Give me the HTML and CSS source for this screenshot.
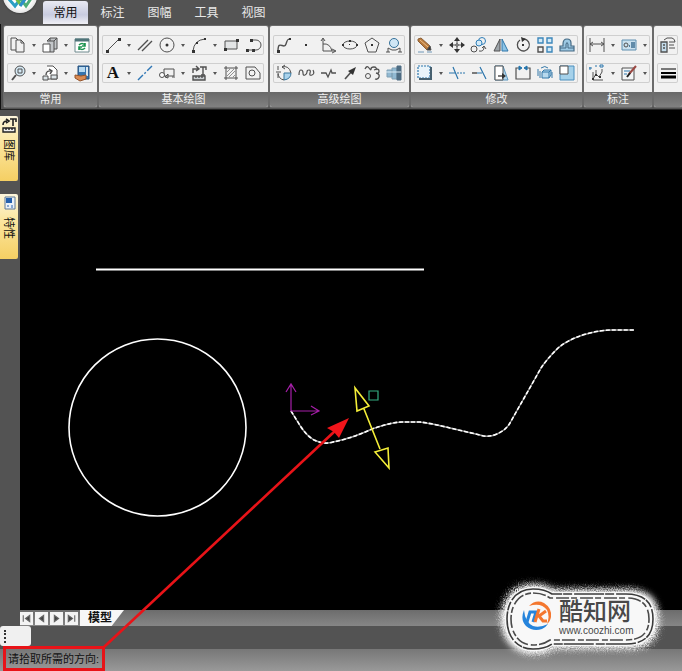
FILE: index.html
```html
<!DOCTYPE html>
<html lang="zh-CN">
<head>
<meta charset="UTF-8" />
<meta name="viewport" content="width=device-width, initial-scale=1" />
<title>电子图板</title>
<link rel="stylesheet" href="styles.css">
</head>
<body>
  <header class="menu-bar">
    <button class="app-button" type="button" aria-label="菜单">
      <svg viewBox="0 0 34 34">
        <path d="M5 19l7 8 6-8" stroke="#2b9fc4" stroke-width="3" />
        <path d="M12 18l6 8" stroke="#74bd45" stroke-width="3" />
        <path d="M17 19l6 8 6-9" stroke="#4fae78" stroke-width="3" />
        <path d="M17 27l6-8" stroke="#2d8fcb" stroke-width="3" />
      </svg>
    </button>
    <nav class="tabs">
      <button class="tab active" type="button">常用</button>
      <button class="tab" type="button">标注</button>
      <button class="tab" type="button">图幅</button>
      <button class="tab" type="button">工具</button>
      <button class="tab" type="button">视图</button>
    </nav>
  </header>

  <div class="ribbon">
    <section class="panel">
      <div class="panel-body">
        <div class="group">
          <button class="tool" type="button" aria-label="复制"><svg viewBox="0 0 18 18"><path d="M7 14H2V2h5l2 2M7 4h5l3 3v9H7zM12 4v3h3" /></svg></button>
          <button class="more" type="button" aria-label="更多"></button>
          <button class="tool" type="button" aria-label="粘贴"><svg viewBox="0 0 18 18"><path d="M6 5l3-3h7v11h-3M6 5h7v11H9" fill="#c3c6c9" /><path d="M9 2v3M13 5l3-3" /><path d="M2 8h7v8H2z" fill="#fff" /></svg></button>
          <button class="more" type="button" aria-label="更多"></button>
          <button class="tool" type="button" aria-label="刷新"><svg viewBox="0 0 18 18"><path d="M2 3h14v13H2z" fill="#fff" stroke="#6f8a8e" /><path d="M2 4h14" stroke="#4f7479" stroke-width="3" /><path d="M6 9q3-3 6 0M12 7v3H9M12 12q-3 3-6 0M6 14v-3h3" stroke="#1c9450" stroke-width="1.6" /></svg></button>
        </div>
        <div class="group">
          <button class="tool" type="button" aria-label="缩放"><svg viewBox="0 0 18 18"><circle cx="11" cy="7" r="5" fill="#d6eaf5" /><path d="M9 5h4v4H9z" /><path d="M7 11l-4 5" stroke-width="2" /></svg></button>
          <button class="more" type="button" aria-label="更多"></button>
          <button class="tool" type="button" aria-label="块"><svg viewBox="0 0 18 18"><path d="M6 2h6l4 4v9H7" fill="#fff" /><path d="M2 12h5v4H2zM10 11h6v4h-6z" fill="#dce4e8" /><path d="M5 11q0-5 6-4M8 5l3 2-2 3" stroke-width="1.4" /></svg></button>
          <button class="more" type="button" aria-label="更多"></button>
          <button class="tool" type="button" aria-label="特性"><svg viewBox="0 0 18 18"><path d="M5 2h11v13H5z" fill="#3775af" stroke="#264f79" /><path d="M6 3h6v5H6z" fill="#b8daf1" stroke="none" /><path d="M13 3h2v9h-2z" fill="#dbe7f0" stroke="none" /><path d="M2 11l6 1 5-1v4l-6 2-5-3z" fill="#d98a52" stroke="#94542c" /></svg></button>
        </div>
      </div>
      <h2 class="panel-title">常用</h2>
    </section>

    <section class="panel">
      <div class="panel-body">
        <div class="group">
          <button class="tool" type="button" aria-label="直线"><svg viewBox="0 0 18 18"><path d="M3 15L15 3" /><path d="M2 14h3v3H2zM14 2h3v3h-3z" class="solid" /></svg></button>
          <button class="more" type="button" aria-label="更多"></button>
          <button class="tool" type="button" aria-label="平行线"><svg viewBox="0 0 18 18"><path d="M2 14L12 4M6 15L16 5" stroke-width="1.4" /></svg></button>
          <button class="tool" type="button" aria-label="圆"><svg viewBox="0 0 18 18"><circle cx="9" cy="9" r="7" /><circle cx="9" cy="9" r="1.5" class="solid" /></svg></button>
          <button class="more" type="button" aria-label="更多"></button>
          <button class="tool" type="button" aria-label="圆弧"><svg viewBox="0 0 18 18"><path d="M3 15Q4 4 15 3" /><path d="M2 14h3v3H2zM14 2h2v2h-2zM6 6h2v2H6z" class="solid" /></svg></button>
          <button class="more" type="button" aria-label="更多"></button>
          <button class="tool" type="button" aria-label="矩形"><svg viewBox="0 0 18 18"><path d="M3 5h12v8H3z" fill="#e3e5e6" /><path d="M2 12h3v3H2zM14 3h3v3h-3z" class="solid" /></svg></button>
          <button class="tool" type="button" aria-label="多段线"><svg viewBox="0 0 18 18"><path d="M8 4h4a5 5 0 0 1 0 10H9" /><path d="M6 3h3v3H6zM2 13h3v3H2zM8 13h3v3H8z" class="solid" /><path d="M4 14h5" /></svg></button>
        </div>
        <div class="group">
          <button class="tool letter" type="button" aria-label="文字">A</button>
          <button class="more" type="button" aria-label="更多"></button>
          <button class="tool" type="button" aria-label="中心线"><svg viewBox="0 0 18 18"><path d="M2 16L16 2" stroke="#2e76b5" stroke-width="1.4" stroke-dasharray="7 2 2 2" /></svg></button>
          <button class="tool" type="button" aria-label="孔"><svg viewBox="0 0 18 18"><path d="M6 5h10v7H6z" /><circle cx="4" cy="11" r="2.5" fill="#fff" /><path d="M7 13l3-3v4zM14 13h3" /></svg></button>
          <button class="more" type="button" aria-label="更多"></button>
          <button class="tool" type="button" aria-label="提取图符"><svg viewBox="0 0 18 18"><path d="M3 12h12v4H3zM6 12v2M9 12v2M12 12v2" fill="#c9ced1" stroke-width="1.4" /><path d="M3 9V5h5M6 2l3 3-3 2M10 3h6v3M13 3v8M11 11h4" stroke-width="1.4" /></svg></button>
          <button class="more" type="button" aria-label="更多"></button>
          <button class="tool" type="button" aria-label="剖面线"><svg viewBox="0 0 18 18"><path d="M4 2v14M14 2v14M2 4h14M2 14h14" /><path d="M5 8l3-3M5 12l7-7M7 13l6-6M11 13l2-2" stroke="#909090" /></svg></button>
          <button class="tool" type="button" aria-label="局部放大"><svg viewBox="0 0 18 18"><path d="M2 3h9l5 6v6H2z" /><circle cx="8" cy="9" r="3" /></svg></button>
        </div>
      </div>
      <h2 class="panel-title">基本绘图</h2>
    </section>

    <section class="panel">
      <div class="panel-body">
        <div class="group">
          <button class="tool" type="button" aria-label="样条"><svg viewBox="0 0 18 18"><path d="M3 15C3 3 9 14 11 8S12 4 15 3" stroke-width="1.4" /><path d="M2 14h3v3H2zM14 2h2v2h-2z" class="solid" /></svg></button>
          <button class="tool" type="button" aria-label="点"><svg viewBox="0 0 18 18"><path d="M8 8h2v2H8z" class="solid" /></svg></button>
          <button class="tool" type="button" aria-label="公式曲线"><svg viewBox="0 0 18 18"><path d="M4 3v12h12M4 8q7-1 9 7M2 5l2-3 2 3M13 13l4 2-4 2" /></svg></button>
          <button class="tool" type="button" aria-label="椭圆"><svg viewBox="0 0 18 18"><ellipse cx="9" cy="9" rx="7" ry="4" /><path d="M1 8h2v2H1zM15 8h2v2h-2zM8 4h2v2H8zM8 8h1v1H8z" class="solid" /></svg></button>
          <button class="tool" type="button" aria-label="正多边形"><svg viewBox="0 0 18 18"><path d="M9 2l7 5-3 9H5L2 7z" /><path d="M8 8h2v2H8z" class="solid" /></svg></button>
          <button class="tool" type="button" aria-label="圆弧拟合"><svg viewBox="0 0 18 18"><circle cx="9" cy="7" r="4.5" fill="#cfe6f5" stroke="#35719a" /><path d="M3 16v-4l4 2h4l4-2v4M1 16h4M13 16h4" /></svg></button>
        </div>
        <div class="group">
          <button class="tool" type="button" aria-label="圆形阵列"><svg viewBox="0 0 18 18"><path d="M9 9h7q0 6-7 7z" fill="#a9d2ec" stroke="#39769d" /><path d="M9 16a7 7 0 0 1-6-7M7 3q7-2 9 6M3 2v4M1 8h5M3 10v4M7 3l3-2M7 3l3 2" /></svg></button>
          <button class="tool" type="button" aria-label="波浪线"><svg viewBox="0 0 18 18"><path d="M2 11Q2 6 4 6T6 9t2 2 2-3 2-2 1 3 2 2 1-5" stroke-width="1.2" /></svg></button>
          <button class="tool" type="button" aria-label="双折线"><svg viewBox="0 0 18 18"><path d="M2 9h5l2 4 3-7 1 3h4" stroke-width="1.3" /></svg></button>
          <button class="tool" type="button" aria-label="箭头"><svg viewBox="0 0 18 18"><path d="M4 15l7-8" stroke-width="1.6" /><path d="M15 3l-3 8-5-4z" class="solid" /></svg></button>
          <button class="tool" type="button" aria-label="云线"><svg viewBox="0 0 18 18"><path d="M2 5q2-4 4-1t2 1 3-2 2 3M11 6q5-2 5 1t-3 2q4 1 3 4t-4 2" stroke-width="1.3" /><circle cx="5" cy="12" r="2.5" /></svg></button>
          <button class="tool" type="button" aria-label="轴"><svg viewBox="0 0 18 18"><path d="M2 6h5v7H2zM7 4h5v11H7z" fill="#91b9d2" stroke="#7f9fb4" /><path d="M12 2h4v14h-4z" fill="#4e6d83" stroke="#4e6d83" /><path d="M1 8h15" stroke="#dcecf6" /></svg></button>
        </div>
      </div>
      <h2 class="panel-title">高级绘图</h2>
    </section>

    <section class="panel">
      <div class="panel-body">
        <div class="group">
          <button class="tool" type="button" aria-label="删除"><svg viewBox="0 0 18 18"><path d="M2 3l3-1 9 8-3 4-9-9z" fill="#b97a3d" stroke="#8a6038" /><path d="M4 4l8 7" stroke="#edc088" /><path d="M11 14l3-4 1 4z" fill="#333" /><path d="M2 16h6M11 16h5" stroke="#6f97b8" /></svg></button>
          <button class="more" type="button" aria-label="更多"></button>
          <button class="tool" type="button" aria-label="平移"><svg viewBox="0 0 18 18"><path d="M9 3v12M3 9h12" /><path d="M9 1l3 4H6zM9 17l3-4H6zM1 9l4-3v6zM17 9l-4-3v6z" class="solid" /><path d="M8 8h2v2H8z" fill="#fff" /></svg></button>
          <button class="tool" type="button" aria-label="平移复制"><svg viewBox="0 0 18 18"><circle cx="12" cy="5" r="3.5" stroke="#2e7eb8" /><circle cx="9" cy="7" r="3" stroke="#2e7eb8" fill="#d4eaf7" /><circle cx="4" cy="13" r="3" /><path d="M9 15q5 1 5-4M12 12l2-2 2 3" /></svg></button>
          <button class="tool" type="button" aria-label="镜像"><svg viewBox="0 0 18 18"><path d="M8 3v12H2z" fill="#9da4a9" /><path d="M10 3v12h6z" fill="#8dc4e6" stroke="#2e76aa" /></svg></button>
          <button class="tool" type="button" aria-label="旋转"><svg viewBox="0 0 18 18"><path d="M10 3a6 6 0 1 1-4 1" stroke-width="1.3" /><path d="M7 1l5 2-4 3zM8 8h2v2H8z" class="solid" /></svg></button>
          <button class="tool" type="button" aria-label="阵列"><svg viewBox="0 0 18 18"><path d="M2 2h5v5H2zM11 2h5v5h-5zM11 11h5v5h-5z" stroke="#3c87bb" fill="#d4eaf7" stroke-width="1.4" /><path d="M2 11h5v5H2z" stroke-width="1.4" /></svg></button>
          <button class="tool" type="button" aria-label="等距线"><svg viewBox="0 0 18 18"><path d="M2 10h3V8q0-5 4-5t4 4v3h3v5H2z" fill="#9cc8e3" stroke="#466b85" stroke-width="1.2" /><path d="M2 12h6V8q1-3 2 0v4h6" stroke="#466b85" /></svg></button>
        </div>
        <div class="group">
          <button class="tool" type="button" aria-label="拉伸"><svg viewBox="0 0 18 18"><path d="M2 2h12v12H2z" fill="#eaf4fa" stroke="#2d76ac" stroke-width="1.2" stroke-dasharray="2 1" /><path d="M15 3v12H3" stroke="#47606f" stroke-width="2" /></svg></button>
          <button class="more" type="button" aria-label="更多"></button>
          <button class="tool" type="button" aria-label="裁剪"><svg viewBox="0 0 18 18"><path d="M5 3l5 12M1 9h6" stroke="#2d76ac" stroke-width="1.2" /><path d="M9 9h8" stroke="#2d76ac" stroke-dasharray="2 1" /></svg></button>
          <button class="tool" type="button" aria-label="延伸"><svg viewBox="0 0 18 18"><path d="M2 9h5" stroke-width="1.4" /><path d="M7 9h5M10 3l6 12" stroke="#2d76ac" stroke-width="1.2" /></svg></button>
          <button class="tool" type="button" aria-label="拉伸面"><svg viewBox="0 0 18 18"><path d="M3 2h8l5 14H3z" fill="#b5d8ee" stroke="#5a95bd" /><path d="M3 2h8v14H3z" fill="#fff" /><path d="M6 12h6" stroke-width="1.4" /><path d="M10 9l4 3-4 3z" class="solid" /></svg></button>
          <button class="tool" type="button" aria-label="打断"><svg viewBox="0 0 18 18"><path d="M5 4H2v11h14V4h-3" stroke-width="1.2" /><path d="M5 2l3 2-3 2zM13 2l-3 2 3 2z" fill="#2375ad" stroke="#2375ad" /></svg></button>
          <button class="tool" type="button" aria-label="分解"><svg viewBox="0 0 18 18"><path d="M6 8l2-2h7v5l-2 3H6zM6 8h7v6M13 8l2-2" fill="#b7d9ee" stroke="#3479a9" /><path d="M2 5v7M4 7v7M5 4q4-3 7 0M16 8v6" stroke="#3479a9" /></svg></button>
          <button class="tool" type="button" aria-label="缩放图形"><svg viewBox="0 0 18 18"><path d="M2 2h14v14H2z" fill="#a5d1ea" stroke="#4b8fbe" /><path d="M2 2h8v8H2z" fill="#fff" /></svg></button>
        </div>
      </div>
      <h2 class="panel-title">修改</h2>
    </section>

    <section class="panel compact">
      <div class="panel-body">
        <div class="group">
          <button class="tool" type="button" aria-label="尺寸标注"><svg viewBox="0 0 18 18"><path d="M2 2v14M16 2v14M2 8h14M5 6L2 8l3 2M13 6l3 2-3 2" /></svg></button>
          <button class="more" type="button" aria-label="更多"></button>
          <button class="tool" type="button" aria-label="形位公差"><svg viewBox="0 0 18 18"><path d="M2 4h14v10H2z" fill="#c9e0ef" stroke="#5f8fb0" /><circle cx="6" cy="9" r="2" /><path d="M9 10h1M12 6v6M14 6v6" stroke="#285e84" stroke-width="1.3" /></svg></button>
          <button class="more" type="button" aria-label="更多"></button>
        </div>
        <div class="group">
          <button class="tool" type="button" aria-label="坐标标注"><svg viewBox="0 0 18 18"><path d="M5 8v8h10M5 15l3-5 3 3 3-5M8 10V6M14 8V5" /><path d="M2 3v3M1 4h3M7 2h2M12 1h3v2h-3z" stroke="#2d76ac" /><path d="M4 14h2v2H4zM7 10h2v2H7zM11 12h2v2h-2z" class="solid" /></svg></button>
          <button class="more" type="button" aria-label="更多"></button>
          <button class="tool" type="button" aria-label="标注编辑"><svg viewBox="0 0 18 18"><path d="M2 4h12v12H2z" fill="#f4f6f7" /><path d="M4 7h6M4 10h3" stroke="#2d76ac" /><path d="M9 10l7-8" stroke="#9b4944" stroke-width="2" /><path d="M7 13l3-4" stroke="#222" stroke-width="2" /></svg></button>
          <button class="more" type="button" aria-label="更多"></button>
        </div>
      </div>
      <h2 class="panel-title">标注</h2>
    </section>

    <section class="panel last">
      <div class="panel-body">
        <div class="group">
          <button class="tool" type="button" aria-label="图层"><svg viewBox="0 0 18 18"><path d="M2 6h6v10H2zM4 9h2M4 12h2" fill="#c4dceb" stroke-width="1.3" /><path d="M5 4l3-2h5q3 1 3 4M10 6h6M10 9h5M10 12h6" /></svg></button>
          <button class="tool" type="button" aria-label="图层列表"></button>
        </div>
        <div class="group">
          <button class="tool" type="button" aria-label="线宽"><svg viewBox="0 0 18 18"><path d="M2 5h15" stroke="#000" stroke-width="1" /><path d="M2 9h15" stroke="#000" stroke-width="2" /><path d="M2 13h15" stroke="#000" stroke-width="3" /></svg></button>
          <button class="tool" type="button" aria-label="线宽列表"></button>
        </div>
      </div>
      <h2 class="panel-title"></h2>
    </section>
  </div>

  <main class="workspace">
    <aside class="side-bar">
      <button class="side-tab" type="button">
        <svg viewBox="0 0 16 16"><path d="M2 11h12v4H2zM5 11v2M8 11v2M11 11v2" fill="#eee" stroke-width="1.4" /><path d="M2 8q0-4 4-4M5 2l3 2-3 2M9 2h6v3M12 2v7" stroke-width="1.6" /></svg>
        <span>图库</span>
      </button>
      <button class="side-tab" type="button">
        <svg viewBox="0 0 16 16"><path d="M4 2h10v12H4z" fill="#eaf1f7" stroke="#5e7994" /><path d="M5 3h6v5H5z" fill="#2461ae" stroke="none" /><path d="M6 11h2M11 10v3" stroke="#2461ae" /></svg>
        <span>特性</span>
      </button>
    </aside>

    <div class="canvas">
      <svg viewBox="20 110 662 500" preserveAspectRatio="xMinYMin meet" aria-label="绘图区">
        <path d="M96 269.500H424" stroke="#fff" stroke-width="1.8" />
        <circle cx="157.500" cy="427.500" r="88.500" stroke="#fff" stroke-width="1.6" />
        <path d="M291 411L301 427Q307 436 314 440Q324 445 333 442Q353 438 372 429Q392 422 402 422H420Q435 424 450 428L480 435Q488 438 497 434Q506 430 510 423L541 368Q547 359 558 348Q570 338 590 333Q602 330 612 330H634" stroke="#999" stroke-width="1.4" />
        <path d="M291 411L301 427Q307 436 314 440Q324 445 333 442Q353 438 372 429Q392 422 402 422H420Q435 424 450 428L480 435Q488 438 497 434Q506 430 510 423L541 368Q547 359 558 348Q570 338 590 333Q602 330 612 330H634" stroke="#fff" stroke-width="1.6" stroke-dasharray="4 2" />
        <!-- local axes -->
        <path d="M291 411V384M286 392l5-8 5 8M291 411h28M311 406l8 5-8 4" stroke="#a51fa8" stroke-width="1.2" />
        <!-- offset direction -->
        <path d="M364 409L380 449M355 388l2 23 12-5zM375 452l13-4 1 20z" stroke="#f4ee38" stroke-width="1.6" />
        <path d="M369 391h9v9h-9z" stroke="#35ad82" stroke-width="1.2" />
      </svg>
    </div>
  </main>

  <div class="sheet-bar">
    <button class="sheet-nav" type="button" aria-label="首页"><svg viewBox="0 0 12 12"><path d="M3 3v6M9 3v6L5 6z" /></svg></button>
    <button class="sheet-nav" type="button" aria-label="上一页"><svg viewBox="0 0 12 12"><path d="M8 3v6L4 6z" /></svg></button>
    <button class="sheet-nav" type="button" aria-label="下一页"><svg viewBox="0 0 12 12"><path d="M4 3v6l4-3z" /></svg></button>
    <button class="sheet-nav" type="button" aria-label="末页"><svg viewBox="0 0 12 12"><path d="M9 3v6M3 3v6l4-3z" /></svg></button>
    <button class="sheet-tab" type="button">模型</button>
  </div>

  <div class="tool-strip">
    <div class="grip"></div>
  </div>

  <footer class="command-bar">请拾取所需的方向:</footer>

  <svg class="callout" viewBox="0 0 682 671" preserveAspectRatio="xMinYMin meet" aria-hidden="true">
    <path d="M104 647L335 431" stroke="#e81318" stroke-width="2.6" />
    <path d="M349 418L339 438L334 432L327 428z" fill="#f2151b" />
    <rect x="4.500" y="647.500" width="99" height="22" stroke="#e81318" stroke-width="3" />
  </svg>

  <div class="brand">
    <svg class="brand-plate" viewBox="0 0 180 90" aria-hidden="true">
      <defs>
        <filter id="glow" x="-10%" y="-20%" width="120%" height="140%">
          <feTurbulence type="fractalNoise" baseFrequency="0.9" numOctaves="2" seed="4" result="noise" />
          <feGaussianBlur in="SourceGraphic" stdDeviation="3" result="soft" />
          <feDisplacementMap in="soft" in2="noise" scale="8" />
        </filter>
      </defs>
      <path d="M41 11q14 0 20 5h75q31 0 31 30t-31 30H61q-6 5-20 5C21 81 9 66 9 46S21 11 41 11z" fill="#fff" filter="url(#glow)" />
      <path d="M41 14q12 0 19 5h74q29 0 29 27t-29 27H60q-7 5-19 5C23 78 13 64 13 46S23 14 41 14z" fill="#f8f8f8" />
      <path d="M41 16q12 0 19 5h74q27 0 27 25t-27 25H60q-7 5-19 5C24 76 15 63 15 46S24 16 41 16z" stroke="#3a3a3a" stroke-width="1.6" stroke-dasharray="30 1 9 2" />
      <path d="M41 20q10 0 17 5h76q23 0 23 21t-23 21H58q-7 5-17 5C27 72 19 60 19 46S27 20 41 20z" stroke="#4a4a4a" stroke-width="1.6" stroke-dasharray="13 2 6 3" />
    </svg>
    <div class="brand-content">
      <svg class="brand-logo" viewBox="0 0 32 32" aria-hidden="true">
        <path d="M8 7Q15 0 23 4Q31 9 30 18Q29 23 26 25Q29 17 26 11Q20 3 8 7z" fill="#f4772f" />
        <path d="M3 11Q-1 21 5 27Q12 33 21 30Q25 28 27 25Q19 29 12 27Q4 23 3 11z" fill="#2584dc" />
        <path d="M6 23l3-10h6l-3 10" stroke="#2584dc" stroke-width="3" />
        <path d="M18 10l-4 13M25 12l-7 5 4 5h4" stroke="#f4772f" stroke-width="3" />
      </svg>
      <div class="brand-text">
        <strong>酷知网</strong>
        <span>www.coozhi.com</span>
      </div>
    </div>
  </div>
</body>
</html>
```

FILE: styles.css
```css
* {
  box-sizing: border-box;
}
body {
  position: relative;
  display: flex;
  flex-direction: column;
  min-height: 100vh;
  margin: 0;
  overflow: hidden;
  background: #535353;
  font-family: "Liberation Sans", "Noto Sans CJK SC", sans-serif;
  font-size: 11px;
  color: #111;
}
button {
  padding: 0;
  border: none;
  background: none;
  font-family: inherit;
  color: inherit;
}
svg {
  display: block;
  fill: none;
  stroke: none;
}

/* Menu */
.menu-bar {
  display: flex;
  gap: 6px;
  height: 24px;
  padding-left: 3px;
  overflow: hidden;
}
.app-button {
  flex: none;
  width: 34px;
  height: 34px;
  margin-top: -21px;
  border-radius: 50%;
  background: radial-gradient(circle, #fff 50%, #c9c9c9 90%);
  box-shadow: 0 0 2px #222;
}
.tabs {
  display: flex;
  gap: 2px;
  padding-top: 1px;
}
.tab {
  width: 45px;
  font-size: 12px;
  line-height: 20px;
  color: #e8e8e8;
}
.tab.active {
  border-radius: 3px 3px 0 0;
  background: linear-gradient(#e9eaf3, #c9cce0 60%, #f0f0f5);
  color: #111;
}

/* Ribbon */
.ribbon {
  display: flex;
  gap: 2px;
  height: 86px;
  padding: 2px 0 2px 3px;
  border-left: 1px solid #111;
  border-bottom: 1px solid #222;
  overflow: hidden;
}
.panel {
  flex: none;
  border-radius: 2px;
  background: #f1f1f1;
  box-shadow: 0 0 0 1px #6b6b6b;
  overflow: hidden;
}
.panel-body {
  display: flex;
  flex-direction: column;
  gap: 8px;
  padding: 9px 4px 9px 3px;
}
.compact .panel-body {
  padding: 9px 2px;
}
.last {
  flex: 1;
}
.group {
  display: flex;
  height: 20px;
  border-radius: 2px;
  box-shadow: inset 0 0 0 1px #cfcfcf;
}
.tool {
  display: flex;
  flex: none;
  align-items: center;
  justify-content: center;
  width: 22px;
  height: 20px;
}
.tool svg {
  width: 18px;
  height: 18px;
  stroke: #505050;
}
.tool .solid {
  fill: #333;
  stroke: none;
}
.letter {
  font-family: "Liberation Serif", serif;
  font-size: 17px;
  font-weight: 700;
}
.more {
  display: flex;
  flex: none;
  align-items: center;
  justify-content: center;
  width: 10px;
}
.more::before {
  content: "";
  border: 2px solid transparent;
  border-top: 3px solid #555;
  border-bottom: 0;
}
.panel-title {
  height: 16px;
  margin: 0;
  background: linear-gradient(#686868, #828282);
  font-size: 11px;
  font-weight: 400;
  line-height: 15px;
  text-align: center;
  color: #f2f2f2;
}

/* Workspace */
.workspace {
  display: flex;
  flex: 1;
}
.side-bar {
  display: flex;
  flex-direction: column;
  gap: 13px;
  width: 20px;
  padding-top: 6px;
}
.side-tab {
  display: flex;
  flex-direction: column;
  align-items: center;
  gap: 6px;
  width: 18px;
  height: 65px;
  padding-top: 1px;
  border-radius: 0 2px 2px 0;
  background: linear-gradient(#fdf6dc, #fbe6a0 40%, #f5cf63);
}
.side-tab svg {
  width: 16px;
  height: 16px;
  stroke: #222;
}
.side-tab span {
  font-size: 11px;
  line-height: 14px;
  writing-mode: vertical-rl;
  text-orientation: sideways;
}
.canvas {
  flex: 1;
  background: #000;
}
.canvas svg {
  width: 100%;
  height: 100%;
}

/* Sheets */
.sheet-bar {
  display: flex;
  gap: 2px;
  height: 16px;
  margin-left: 20px;
  background: linear-gradient(#6c6c6c, #868686);
}
.sheet-nav {
  width: 13px;
  height: 13px;
  margin-top: 2px;
  background: #f3f3f3;
}
.sheet-nav svg {
  stroke: #666;
}
.sheet-nav path {
  fill: #444;
}
.sheet-tab {
  width: 44px;
  padding-right: 4px;
  background: #f7f7f7;
  clip-path: polygon(0 0, 100% 0, 72% 100%, 0 100%);
  font-size: 12px;
  font-weight: 700;
  line-height: 16px;
}
.tool-strip {
  height: 23px;
}
.grip {
  width: 31px;
  height: 20px;
  padding: 4px;
  border-radius: 3px;
  background: #f0f0f0;
}
.grip::before {
  content: "";
  display: block;
  height: 13px;
  border-left: 2px dotted #333;
}
.command-bar {
  height: 22px;
  padding-left: 8px;
  background: linear-gradient(#777, #999);
  line-height: 21px;
}

/* Overlays */
.callout {
  position: absolute;
  top: 0;
  left: 0;
  width: 100%;
  height: 100%;
  pointer-events: none;
}
.brand {
  position: absolute;
  right: 10px;
  bottom: 8px;
  display: grid;
  width: 180px;
  height: 90px;
}
.brand-plate,
.brand-content {
  grid-area: 1 / 1;
}
.brand-plate {
  width: 180px;
  height: 90px;
}
.brand-content {
  display: flex;
  gap: 6px;
  padding: 26px 0 0 29px;
  z-index: 1;
}
.brand-logo {
  width: 32px;
  height: 32px;
}
.brand-text {
  display: flex;
  flex-direction: column;
  color: #484848;
}
.brand-text strong {
  font-size: 24px;
  font-weight: 500;
  line-height: 26px;
}
.brand-text span {
  font-size: 10px;
  line-height: 12px;
}
```
